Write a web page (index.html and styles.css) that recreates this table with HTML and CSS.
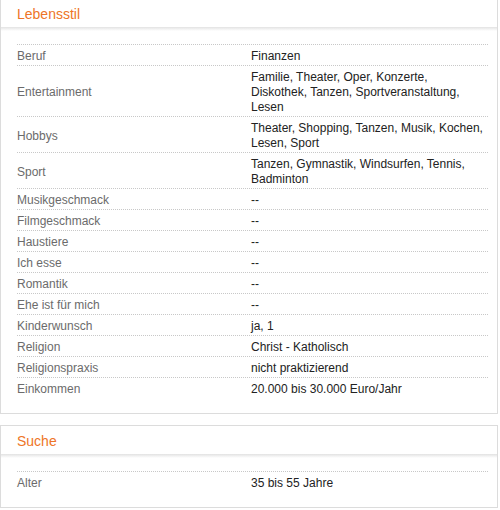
FILE: index.html
```html
<!DOCTYPE html>
<html lang="de">
<head>
<meta charset="utf-8">
<title>Profil</title>
<link rel="stylesheet" href="styles.css">
</head>
<body>
<div class="page">
  <section class="panel">
    <h2 class="panel-head">Lebensstil</h2>
    <div class="panel-shade"></div>
    <div class="panel-body">
      <div class="row"><div class="label">Beruf</div><div class="value">Finanzen</div></div>
      <div class="row"><div class="label">Entertainment</div><div class="value">Familie, Theater, Oper, Konzerte, Diskothek, Tanzen, Sportveranstaltung, Lesen</div></div>
      <div class="row"><div class="label">Hobbys</div><div class="value">Theater, Shopping, Tanzen, Musik, Kochen, Lesen, Sport</div></div>
      <div class="row"><div class="label">Sport</div><div class="value">Tanzen, Gymnastik, Windsurfen, Tennis, Badminton</div></div>
      <div class="row"><div class="label">Musikgeschmack</div><div class="value">--</div></div>
      <div class="row"><div class="label">Filmgeschmack</div><div class="value">--</div></div>
      <div class="row"><div class="label">Haustiere</div><div class="value">--</div></div>
      <div class="row"><div class="label">Ich esse</div><div class="value">--</div></div>
      <div class="row"><div class="label">Romantik</div><div class="value">--</div></div>
      <div class="row"><div class="label">Ehe ist für mich</div><div class="value">--</div></div>
      <div class="row"><div class="label">Kinderwunsch</div><div class="value">ja, 1</div></div>
      <div class="row"><div class="label">Religion</div><div class="value">Christ - Katholisch</div></div>
      <div class="row"><div class="label">Religionspraxis</div><div class="value">nicht praktizierend</div></div>
      <div class="row"><div class="label">Einkommen</div><div class="value">20.000 bis 30.000 Euro/Jahr</div></div>
    </div>
  </section>
  <section class="panel">
    <h2 class="panel-head">Suche</h2>
    <div class="panel-shade"></div>
    <div class="panel-body">
      <div class="row"><div class="label">Alter</div><div class="value">35 bis 55 Jahre</div></div>
    </div>
  </section>
</div>
</body>
</html>
```
FILE: styles.css
```css
html, body {
  margin: 0;
  padding: 0;
  background: #fff;
}
.page {
  width: 498px;
  margin-top: -2px;
  font-family: "Liberation Sans", Arial, sans-serif;
  font-size: 12px;
}
.panel {
  border: 1px solid #dcdcdc;
  background: #fff;
  margin-bottom: 11px;
}
.panel-head {
  margin: 0;
  height: 28px;
  line-height: 30px;
  padding-left: 16px;
  font-size: 14px;
  font-weight: normal;
  color: #ee7526;
}
.panel-shade {
  height: 4px;
  background: linear-gradient(#e2e2e2, #f4f4f4 60%, #fff);
}
.panel-body {
  padding: 13px 9px 15px 16px;
}
.row {
  display: grid;
  grid-template-columns: 234px 1fr;
  border-top: 1px dotted #c8c8c8;
  padding: 4px 0 1px;
  line-height: 15px;
}
.label {
  color: #6b6b6b;
  align-self: center;
}
.value {
  color: #222;
  padding-right: 4px;
}
```
